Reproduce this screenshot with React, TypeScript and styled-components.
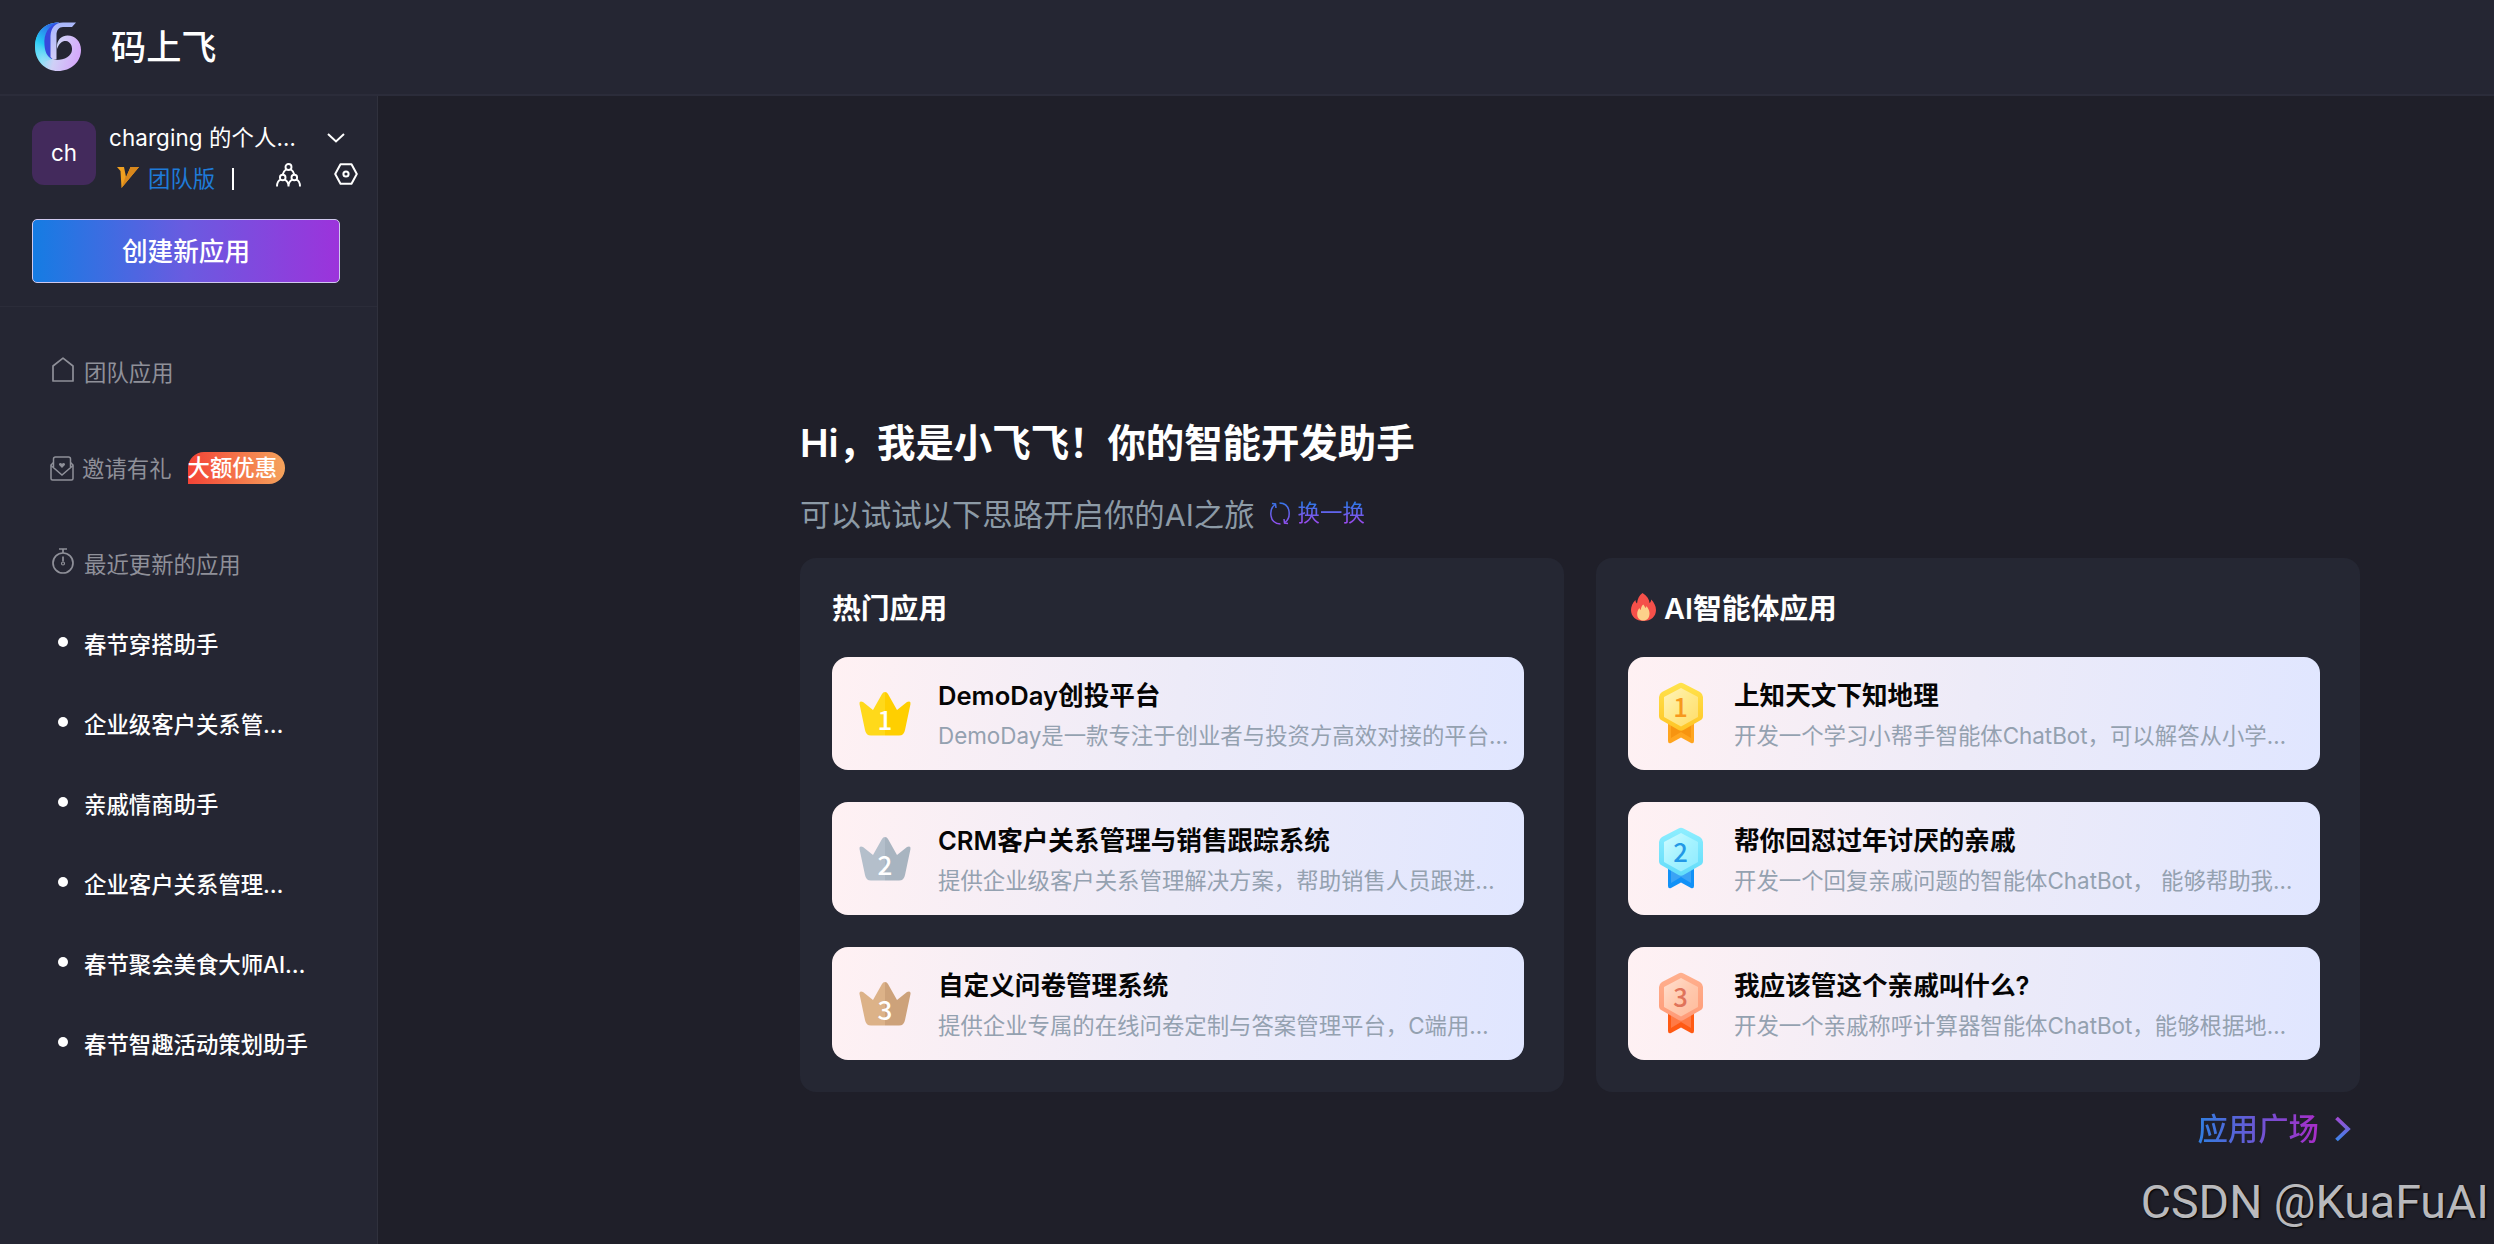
import styled, { createGlobalStyle } from "styled-components";

const GlobalStyle = createGlobalStyle`
  * {
    box-sizing: border-box;
  }

  body {
    margin: 0;
    background-color: #1f1f29;
    color: #ffffff;
    font-family: Inter, "Noto Sans CJK SC", sans-serif;
    font-size: 22.4px;
    overflow: hidden;
  }

  svg {
    display: block;
    flex-shrink: 0;
  }

  h1, h2, h3, p, ul {
    margin: 0;
    padding: 0;
  }
`;

const Page = styled.div`
  display: flex;
  flex-direction: column;
  height: 1244px;
`;

const Header = styled.header`
  display: flex;
  align-items: center;
  gap: 30px;
  height: 96px;
  padding: 0 0 1px 35px;
  background-color: #252633;
  border-bottom: 2px solid #2b2c3a;
`;

const Brand = styled.div`
  font-size: 35.2px;
  font-weight: 500;
  line-height: 48px;
`;

const Body = styled.div`
  display: flex;
  flex: 1;
  min-height: 0;
`;

const Sidebar = styled.aside`
  width: 378px;
  flex-shrink: 0;
  background-color: #252633;
  border-right: 1px solid #30313d;
`;

const Team = styled.div`
  display: flex;
  gap: 13px;
  height: 123px;
  padding: 25px 0 0 32px;
`;

const Avatar = styled.div`
  width: 64px;
  height: 64px;
  border-radius: 12px;
  background-color: #432a5c;
  line-height: 64px;
  text-align: center;
`;

const TeamInfo = styled.div`
  flex: 1;
`;

const TeamName = styled.div`
  display: flex;
  align-items: center;
  justify-content: space-between;
  height: 34px;
  padding-right: 32px;
`;

const Name = styled.span`
  margin-bottom: 5px;
  letter-spacing: 0.1px;
  white-space: nowrap;
`;

const TeamMeta = styled.div`
  display: flex;
  align-items: center;
  height: 44px;
  padding-left: 8px;
`;

const Plan = styled.span`
  margin: 0 0 1px 9px;
  color: #1f7bd8;
`;

const Bar = styled.span`
  width: 2px;
  height: 22px;
  margin: 3px 42px 0 17px;
  background-color: #ffffff;
`;

const Tools = styled.div`
  display: flex;
  gap: 33px;
  margin-top: -5px;
`;

const CreateArea = styled.div`
  padding: 0 37px 23px 32px;
  border-bottom: 1px solid #2b2c39;
`;

const CreateButton = styled.button`
  display: block;
  width: 100%;
  height: 64px;
  padding: 0 0 3px;
  border: 1px solid #cfc8ee;
  border-radius: 5px;
  background: linear-gradient(90deg, #157ce3, #6a5be0 50%, #9c33db);
  color: #ffffff;
  font: inherit;
  font-size: 25.6px;
  font-weight: 500;
`;

const Menu = styled.nav`
  padding-top: 17px;
`;

const MenuItem = styled.div<{ $inset?: number }>`
  display: flex;
  align-items: center;
  height: 96px;
  padding-left: ${(p) => p.$inset ?? 52}px;
  color: #8f9099;
`;

const MenuLabel = styled.span<{ $gap?: number }>`
  margin: 0 0 3px ${(p) => p.$gap ?? 10}px;
`;

const MenuIcon = styled.span<{ $lift?: number }>`
  margin-bottom: ${(p) => p.$lift ?? 0}px;
`;

const Badge = styled.span`
  width: 97px;
  height: 32px;
  margin-left: 16px;
  border-radius: 16px 16px 16px 0;
  background: linear-gradient(90deg, #f44336, #f5a35c);
  color: #ffffff;
  font-weight: 500;
  line-height: 32px;
  white-space: nowrap;
`;

const RecentList = styled.ul`
  margin-top: -8px;
  list-style: none;
`;

const RecentItem = styled.li`
  display: flex;
  align-items: center;
  gap: 16px;
  height: 80px;
  padding: 0 0 3px 58px;
  font-weight: 500;
`;

const Dot = styled.span`
  width: 10px;
  height: 10px;
  margin-bottom: 1px;
  border-radius: 50%;
  background-color: #ffffff;
`;

const Main = styled.main`
  flex: 1;
  padding: 319px 134px 0 422px;
`;

const Greeting = styled.h1`
  font-size: 38.4px;
  font-weight: 600;
  line-height: 56px;
`;

const Hint = styled.div`
  display: flex;
  align-items: center;
  height: 84px;
  margin-bottom: 3px;
  color: #8c9aa6;
  font-size: 30.4px;
`;

const Shuffle = styled.div`
  display: flex;
  align-items: center;
  gap: 8px;
  margin-left: 15px;
  font-size: 22.4px;
`;

const ShuffleText = styled.span`
  background: linear-gradient(180deg, #2f78e8 15%, #9a4bf0 85%);
  background-clip: text;
  color: transparent;
  line-height: 28px;
`;

const Panels = styled.div`
  display: grid;
  grid-template-columns: 764px 764px;
  gap: 32px;
`;

const Panel = styled.section`
  height: 534px;
  padding: 31px 40px 0 32px;
  border-radius: 16px;
  background-color: #252733;
`;

const PanelTitle = styled.h2<{ $inset?: number }>`
  display: flex;
  align-items: center;
  gap: 8px;
  height: 35px;
  margin-bottom: 33px;
  padding-left: ${(p) => p.$inset ?? 0}px;
  font-size: 28.8px;
  font-weight: 600;
`;

const Cards = styled.div`
  display: flex;
  flex-direction: column;
  gap: 32px;
`;

const Card = styled.article`
  display: flex;
  align-items: center;
  height: 113px;
  border-radius: 16px;
  background: linear-gradient(98deg, #fff1f3, #edebf8 50%, #e0e6ff);
`;

const IconSlot = styled.div<{ $lift?: number }>`
  display: flex;
  justify-content: center;
  width: 106px;
  padding-bottom: ${(p) => p.$lift ?? 0}px;
`;

const CardBody = styled.div`
  padding-top: 5px;
`;

const CardTitle = styled.h3`
  color: #050505;
  font-size: 25.6px;
  font-weight: 600;
  line-height: 40px;
  white-space: nowrap;
`;

const CardText = styled.p`
  color: #94a1b0;
  line-height: 40px;
  white-space: pre;
`;

const PlazaLink = styled.div`
  display: flex;
  align-items: center;
  justify-content: flex-end;
  gap: 16px;
  height: 74px;
  padding-right: 9px;
`;

const PlazaText = styled.span`
  margin-bottom: 4px;
  background: linear-gradient(90deg, #2f7fe0, #a92cc8);
  background-clip: text;
  color: transparent;
  font-size: 30.4px;
  font-weight: 500;
`;

const Watermark = styled.div`
  position: absolute;
  right: 5px;
  bottom: 15px;
  color: #b9b9bc;
  font-family: Roboto, sans-serif;
  font-size: 46.5px;
  line-height: 54px;
  text-shadow: 1px 1px 2px #000000;
  white-space: nowrap;
`;

const Logo = () => (
  <svg width="46" height="49" viewBox="0 0 46 49">
    <defs>
      <linearGradient id="logo-body" x1="0" y1="0.35" x2="1" y2="0.65">
        <stop offset="0" stopColor="#2cd6f7" />
        <stop offset="0.25" stopColor="#8fe0f8" />
        <stop offset="0.5" stopColor="#cfd0f6" />
        <stop offset="1" stopColor="#d6a6fb" />
      </linearGradient>
      <linearGradient id="logo-edge" x1="0.6" y1="0" x2="0.2" y2="1">
        <stop offset="0" stopColor="#2d62e8" />
        <stop offset="0.55" stopColor="#25c8f5" />
        <stop offset="1" stopColor="#9be4f8" stopOpacity="0" />
      </linearGradient>
      <linearGradient id="logo-stem" x1="0" y1="0" x2="0" y2="1">
        <stop offset="0" stopColor="#a9b7fa" />
        <stop offset="1" stopColor="#d3cdf8" />
      </linearGradient>
    </defs>
    <path
      d="M24 0.5C9 0.5 0 11 0 25C0 39 10 49 23 49C36 49 46 40 46 28C46 19 40 13.5 32.5 13.5C27 13.5 23 17 22 23V27C24 21 28 18.5 31 19C35 19.6 37.4 23.5 37 28C36.5 34 30 38 21 38L15.5 36V12Z"
      fill="url(#logo-body)"
    />
    <path d="M24 0.5C9 0.5 0 11 0 25C0 31 2 37 6 41L17 37V10Z" fill="url(#logo-edge)" />
    <path d="M25 0.5C13 3 8.500 12 9.500 23C10 30 12 34.500 17 37V10Z" fill="#3748dc" />
    <path
      d="M41 0.500H28C20 0.500 16 6 15.500 14V35L18 37.500H21.500V13C21.500 8 24 5 28 5H37Z"
      fill="url(#logo-stem)"
    />
  </svg>
);

const ChevronDown = () => (
  <svg width="18" height="10" viewBox="0 0 18 10" fill="none">
    <path d="M1 1L9 8.500L17 1" stroke="#ffffff" strokeWidth="2" />
  </svg>
);

const PlanIcon = () => (
  <svg width="22" height="21" viewBox="0 0 22 21">
    <path d="M0 0H7L9 10L13.500 0H22L4.500 21L3.500 4Z" fill="#f0a020" />
    <path d="M13.500 0H22L4.500 21L8.500 9.500L9.500 10Z" fill="#d9871c" />
  </svg>
);

const MembersIcon = () => (
  <svg width="25" height="24" viewBox="0 0 25 24" fill="none" stroke="#ffffff" strokeWidth="1.900">
    <circle cx="12.500" cy="4" r="3" />
    <path d="M10.200 6.200C8 7.800 7 9.500 6.700 11.700M14.800 6.200C17 7.800 18 9.500 18.300 11.700" />
    <circle cx="6.700" cy="14.500" r="2.800" />
    <circle cx="18.300" cy="14.500" r="2.800" />
    <path d="M1 23.500C1 20 2.500 17.500 4.700 16.700M8.700 16.700C10.500 17.500 12.500 20 12.500 23.500C12.500 20 14.500 17.500 16.300 16.700M20.300 16.700C22.500 17.500 24 20 24 23.500" />
  </svg>
);

const SettingsIcon = () => (
  <svg width="24" height="22" viewBox="0 0 24 22" fill="none" stroke="#ffffff" strokeWidth="2">
    <path d="M6.500 1.200H17.500L22.800 11L17.500 20.800H6.500L1.200 11Z" strokeLinejoin="round" />
    <circle cx="12" cy="11" r="2.600" />
  </svg>
);

const HomeIcon = () => (
  <svg width="22" height="25" viewBox="0 0 22 25" fill="none" stroke="#8f9099" strokeWidth="1.700">
    <path d="M1 24V9L11 1.200L21 9V24Z" strokeLinejoin="round" />
  </svg>
);

const InviteIcon = () => (
  <svg width="24" height="25" viewBox="0 0 24 25" fill="none" stroke="#8f9099" strokeWidth="1.500">
    <path d="M3.500 11V3Q3.500 1 5.500 1H18.500Q20.500 1 20.500 3V11" />
    <path d="M3.500 6.500L1 9V22.500Q1 24 2.500 24H21.500Q23 24 23 22.500V9L20.500 6.500" />
    <path d="M1 9.500L12 19L23 9.500" />
    <path d="M12 12L9.300 9.200C8 7.500 10.500 6 12 7.800C13.500 6 16 7.500 14.700 9.200Z" fill="#8f9099" stroke="none" />
  </svg>
);

const TimerIcon = () => (
  <svg width="22" height="26" viewBox="0 0 22 26" fill="none" stroke="#8f9099" strokeWidth="1.700">
    <circle cx="11" cy="15" r="10" />
    <path d="M7 1H15M11 1V5M11 8.500V13.500" />
    <circle cx="11" cy="15.500" r="1.500" strokeWidth="1.200" />
  </svg>
);

const RefreshIcon = () => (
  <svg width="20" height="25" viewBox="0 0 20 25" fill="none" stroke="url(#refresh)" strokeWidth="1.500">
    <defs>
      <linearGradient id="refresh" gradientUnits="userSpaceOnUse" x1="0" y1="0" x2="0" y2="25">
        <stop offset="0" stopColor="#2f78e8" />
        <stop offset="1" stopColor="#9a4bf0" />
      </linearGradient>
    </defs>
    <path d="M5 3.500C-1 8 -1.500 22.500 10.500 23M15 21.500C21 17 21.500 2.500 9.500 2" />
    <path d="M2 2.500L5.500 3L6 7M18 22.500L14.500 22L14 18" />
  </svg>
);

const FireIcon = () => (
  <svg width="25" height="28" viewBox="0 0 25 28">
    <path
      d="M11.500 0C16 3 18.500 6.500 18.500 10C19.500 9.500 20 8.500 20.200 6.500C23 9.500 25 13 25 17C25 23.500 20 28 12.500 28C5 28 0 23.500 0 17C0 13.500 1.500 10 4.500 7C4.500 8.500 5 9.500 6 10.500C6.500 6 8 2.500 11.500 0Z"
      fill="#f5504a"
    />
    <path
      d="M12.200 11.500C13.500 13 14 14 14.500 15C15.200 14.500 15.400 14 15.500 13C17.500 15.500 18.500 18 18.500 20.500C18.500 25 16 27.500 12.300 27.500C8.500 27.500 6.200 25 6.200 21C6.200 18.500 7 16.500 8.500 15C8.700 16 9 16.500 9.800 17C10 14.500 10.800 12.800 12.200 11.500Z"
      fill="#fcd08a"
    />
  </svg>
);

const ArrowIcon = () => (
  <svg width="16" height="26" viewBox="0 0 16 26" fill="none">
    <defs>
      <linearGradient id="arrow" gradientUnits="userSpaceOnUse" x1="0" y1="0" x2="0" y2="26">
        <stop offset="0" stopColor="#a945d0" />
        <stop offset="1" stopColor="#3488ea" />
      </linearGradient>
    </defs>
    <path d="M1.500 2L13 13L1.500 24" stroke="url(#arrow)" strokeWidth="3.800" />
  </svg>
);

const crowns = [
  ["#ffd91a", "#ffcf00"],
  ["#b4bfcb", "#a8b4c0"],
  ["#dcb288", "#cda27a"],
];

const Crown = ({ rank }: { rank: number }) => {
  const [left, right] = crowns[rank - 1];
  return (
    <svg width="52" height="46" viewBox="0 0 52 46">
      <path
        d="M26 1Q24 1 23 3L14 19L4 11Q0 9.500 0.500 13L6 39Q7 44.500 12 44.500H26Z"
        fill={left}
      />
      <path
        d="M26 1Q28 1 29 3L38 19L48 11Q52 9.500 51.500 13L46 39Q45 44.500 40 44.500H26Z"
        fill={right}
      />
      <text
        x="26"
        y="38.500"
        fill="#ffffff"
        fontFamily="Noto Sans CJK SC, sans-serif"
        fontSize="26"
        fontWeight="500"
        textAnchor="middle"
      >
        {rank}
      </text>
    </svg>
  );
};

const medals = [
  { rim: ["#ffe34d", "#ffc526"], face: ["#ffe98a", "#ffdc6a"], shine: "#fff3bd", ribbon: ["#ffa51f", "#f79410"], digit: "#f7981d" },
  { rim: ["#8eeeff", "#62dcfa"], face: ["#a6f3ff", "#8eeaff"], shine: "#d2fbff", ribbon: ["#1191f7", "#3ba3f5"], digit: "#2398e6" },
  { rim: ["#ffb08e", "#ff9b78"], face: ["#ffc9ae", "#ffbb9c"], shine: "#ffe0d0", ribbon: ["#ff5a14", "#ff7a45"], digit: "#e0735a" },
];

const Medal = ({ rank }: { rank: number }) => {
  const m = medals[rank - 1];
  return (
    <svg width="44" height="62" viewBox="0 0 44 62">
      <defs>
        <linearGradient id={`rim-${rank}`} x1="0" y1="0" x2="0" y2="1">
          <stop offset="0" stopColor={m.rim[0]} />
          <stop offset="1" stopColor={m.rim[1]} />
        </linearGradient>
        <linearGradient id={`face-${rank}`} x1="0" y1="0" x2="1" y2="1">
          <stop offset="0" stopColor={m.shine} />
          <stop offset="0.5" stopColor={m.face[0]} />
          <stop offset="1" stopColor={m.face[1]} />
        </linearGradient>
      </defs>
      <path
        d="M9 38H35V59Q35 62 32 61L22 55.500L12 61Q9 62 9 59Z"
        fill={m.ribbon[0]}
      />
      <path d="M12 42H32V56L22 50L12 56Z" fill={m.ribbon[1]} />
      <path
        d="M19.500 1.500Q22 0 24.500 1.500L41 10Q44 12 44 15V34Q44 37 41 38.500L24.500 48Q22 49.500 19.500 48L3 38.500Q0 37 0 34V15Q0 12 3 10Z"
        fill={`url(#rim-${rank})`}
      />
      <path d="M22 6L39 15V35L22 44.500L5 35V15Z" fill={`url(#face-${rank})`} />
      <text
        x="21.500"
        y="34.500"
        fill={m.digit}
        fontFamily="Noto Sans CJK SC, sans-serif"
        fontSize="25.600"
        fontWeight="500"
        textAnchor="middle"
      >
        {rank}
      </text>
    </svg>
  );
};

const recent = [
  "春节穿搭助手",
  "企业级客户关系管…",
  "亲戚情商助手",
  "企业客户关系管理…",
  "春节聚会美食大师AI…",
  "春节智趣活动策划助手",
];

const hotApps = [
  { title: "DemoDay创投平台", text: "DemoDay是一款专注于创业者与投资方高效对接的平台…" },
  { title: "CRM客户关系管理与销售跟踪系统", text: "提供企业级客户关系管理解决方案，帮助销售人员跟进…" },
  { title: "自定义问卷管理系统", text: "提供企业专属的在线问卷定制与答案管理平台，C端用…" },
];

const agentApps = [
  { title: "上知天文下知地理", text: "开发一个学习小帮手智能体ChatBot，可以解答从小学…" },
  { title: "帮你回怼过年讨厌的亲戚", text: "开发一个回复亲戚问题的智能体ChatBot， 能够帮助我…" },
  { title: "我应该管这个亲戚叫什么?", text: "开发一个亲戚称呼计算器智能体ChatBot，能够根据地…" },
];

const App = () => (
  <>
    <GlobalStyle />
    <Page>
      <Header>
        <Logo />
        <Brand>码上飞</Brand>
      </Header>
      <Body>
        <Sidebar>
          <Team>
            <Avatar>ch</Avatar>
            <TeamInfo>
              <TeamName>
                <Name>charging 的个人…</Name>
                <ChevronDown />
              </TeamName>
              <TeamMeta>
                <PlanIcon />
                <Plan>团队版</Plan>
                <Bar />
                <Tools>
                  <MembersIcon />
                  <SettingsIcon />
                </Tools>
              </TeamMeta>
            </TeamInfo>
          </Team>
          <CreateArea>
            <CreateButton>创建新应用</CreateButton>
          </CreateArea>
          <Menu>
            <MenuItem>
              <MenuIcon $lift={5}>
                <HomeIcon />
              </MenuIcon>
              <MenuLabel>团队应用</MenuLabel>
            </MenuItem>
            <MenuItem $inset={50}>
              <MenuIcon>
                <InviteIcon />
              </MenuIcon>
              <MenuLabel $gap={8}>邀请有礼</MenuLabel>
              <Badge>大额优惠</Badge>
            </MenuItem>
            <MenuItem>
              <MenuIcon $lift={7}>
                <TimerIcon />
              </MenuIcon>
              <MenuLabel>最近更新的应用</MenuLabel>
            </MenuItem>
          </Menu>
          <RecentList>
            {recent.map((name) => (
              <RecentItem key={name}>
                <Dot />
                {name}
              </RecentItem>
            ))}
          </RecentList>
        </Sidebar>
        <Main>
          <Greeting>Hi，我是小飞飞！你的智能开发助手</Greeting>
          <Hint>
            可以试试以下思路开启你的AI之旅
            <Shuffle>
              <RefreshIcon />
              <ShuffleText>换一换</ShuffleText>
            </Shuffle>
          </Hint>
          <Panels>
            <Panel>
              <PanelTitle>热门应用</PanelTitle>
              <Cards>
                {hotApps.map((app, i) => (
                  <Card key={app.title}>
                    <IconSlot>
                      <Crown rank={i + 1} />
                    </IconSlot>
                    <CardBody>
                      <CardTitle>{app.title}</CardTitle>
                      <CardText>{app.text}</CardText>
                    </CardBody>
                  </Card>
                ))}
              </Cards>
            </Panel>
            <Panel>
              <PanelTitle $inset={3}>
                <FireIcon />
                AI智能体应用
              </PanelTitle>
              <Cards>
                {agentApps.map((app, i) => (
                  <Card key={app.title}>
                    <IconSlot $lift={2}>
                      <Medal rank={i + 1} />
                    </IconSlot>
                    <CardBody>
                      <CardTitle>{app.title}</CardTitle>
                      <CardText>{app.text}</CardText>
                    </CardBody>
                  </Card>
                ))}
              </Cards>
            </Panel>
          </Panels>
          <PlazaLink>
            <PlazaText>应用广场</PlazaText>
            <ArrowIcon />
          </PlazaLink>
        </Main>
      </Body>
    </Page>
    <Watermark>CSDN @KuaFuAI</Watermark>
  </>
);

export default App;
